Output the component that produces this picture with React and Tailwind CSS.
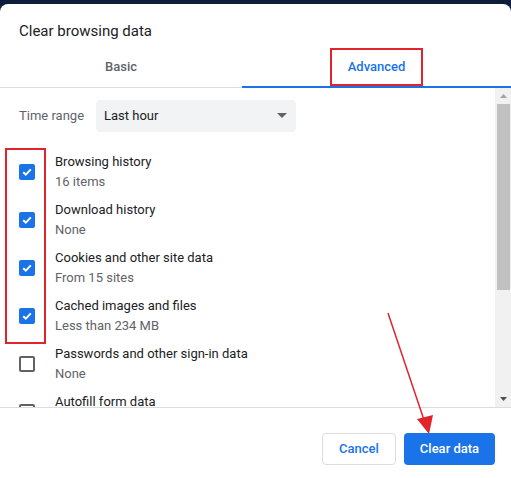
import React from "react";

const rows = [
  { t: "Browsing history", s: "16 items", c: true },
  { t: "Download history", s: "None", c: true },
  { t: "Cookies and other site data", s: "From 15 sites", c: true },
  { t: "Cached images and files", s: "Less than 234 MB", c: true },
  { t: "Passwords and other sign-in data", s: "None", c: false },
  { t: "Autofill form data", s: "", c: false },
];

function Box({ checked }) {
  if (checked) {
    return (
      <div className="w-[16px] h-[16px] rounded-[2px] bg-[#1a73e8] flex items-center justify-center">
        <svg width="12" height="12" viewBox="0 0 12 12">
          <path d="M2.2 6.2 L4.8 8.6 L9.8 3.4" fill="none" stroke="white" strokeWidth="2" />
        </svg>
      </div>
    );
  }
  return <div className="w-[16px] h-[16px] rounded-[2px] border-2 border-[#5f6368]" />;
}

export default function App() {
  return (
    <div
      className="relative w-[511px] h-[478px] bg-[#0f1d3c] pt-[4px] overflow-hidden"
      style={{ fontFamily: "Roboto, 'Liberation Sans', sans-serif" }}
    >
      <div className="bg-white rounded-t-[8px] h-[474px] flex flex-col">
        <div className="pl-[19px] pt-[17px] text-[15px] leading-[20px] text-[#202124]">Clear browsing data</div>
        <div className="mt-[4px] flex h-[43px] border-b border-[#dadce0]">
          <div className="w-[242px] flex items-center justify-center text-[13px] font-medium text-[#5f6368] pt-[1px]">Basic</div>
          <div className="flex-1 flex items-center justify-center text-[13px] font-medium text-[#1a73e8] border-b-2 border-[#1a73e8] -mb-px">
            <div className="relative flex items-center justify-center w-[93px] h-[38px] border-2 border-[#e0242c] mt-[3px]">Advanced</div>
          </div>
        </div>
        <div className="flex h-[320px] border-b border-[#dadce0] overflow-hidden">
          <div className="flex-1 flex flex-col">
            <div className="flex items-center mt-[12px] h-[32px] shrink-0">
              <div className="pl-[19px] w-[96px] text-[13px] text-[#5f6368]">Time range</div>
              <div className="w-[200px] h-[32px] rounded-[4px] bg-[#f1f3f4] flex items-center pl-[8px] pr-[9px] text-[13px] text-[#202124]">
                <span className="flex-1">Last hour</span>
                <svg width="10" height="6" viewBox="0 0 10 6"><path d="M0 0 L10 0 L5 5 Z" fill="#5f6368" /></svg>
              </div>
            </div>
            <div className="relative mt-[16px] flex flex-col">
              <div className="absolute left-[5px] top-0 w-[41px] h-[196px] border-2 border-[#e0242c]" />
              {rows.map((r, i) => (
                <div key={i} className="flex items-center h-[48px] shrink-0">
                  <div className="w-[55px] pl-[19px]"><Box checked={r.c} /></div>
                  <div className="flex flex-col text-[13px] leading-[20px]">
                    <span className="text-[#202124]">{r.t}</span>
                    <span className="text-[#5f6368] h-[20px]">{r.s}</span>
                  </div>
                </div>
              ))}
            </div>
          </div>
          <div className="w-[16px] bg-[#f1f1f1] flex flex-col items-center">
            <div className="h-[16px] flex items-center justify-center">
              <svg width="7" height="4" viewBox="0 0 7 4"><path d="M0 4 L7 4 L3.5 0 Z" fill="#a3a3a3" /></svg>
            </div>
            <div className="w-[13px] h-[186px] bg-[#c1c1c1]" />
            <div className="flex-1" />
            <div className="h-[16px] flex items-center justify-center">
              <svg width="7" height="4" viewBox="0 0 7 4"><path d="M0 0 L7 0 L3.5 4 Z" fill="#505050" /></svg>
            </div>
          </div>
        </div>
        <div className="flex justify-end gap-[8px] pr-[16px] pt-[25px]">
          <button className="w-[74px] h-[32px] rounded-[4px] border border-[#dadce0] bg-white text-[13px] font-medium text-[#1a73e8]">Cancel</button>
          <button className="w-[91px] h-[32px] rounded-[4px] bg-[#1a73e8] text-[13px] font-medium text-white">Clear data</button>
        </div>
      </div>
      <svg className="absolute left-0 top-0 pointer-events-none" width="511" height="478" viewBox="0 0 511 478">
        <line x1="388" y1="313" x2="424" y2="420" stroke="#e0242c" strokeWidth="1.5" />
        <path d="M417 419 L433 415 L429 434 Z" fill="#e0242c" />
      </svg>
    </div>
  );
}
